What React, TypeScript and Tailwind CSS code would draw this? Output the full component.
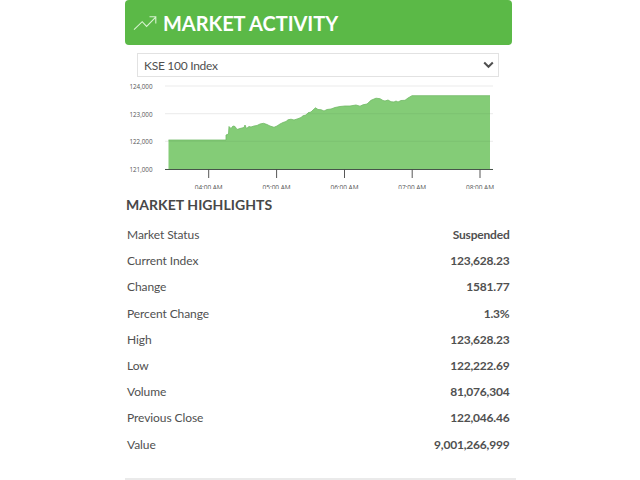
const rows: [string, string][] = [
  ["Market Status", "Suspended"],
  ["Current Index", "123,628.23"],
  ["Change", "1581.77"],
  ["Percent Change", "1.3%"],
  ["High", "123,628.23"],
  ["Low", "122,222.69"],
  ["Volume", "81,076,304"],
  ["Previous Close", "122,046.46"],
  ["Value", "9,001,266,999"],
];

const line =
  "168.5,140 226,140 226,135 228.5,134 229,126.5 231,128.5 233,126 235,126.5 237,129.5 240,128.5 244,127.5 245,125 246.5,128.5 249,126.5 251,127 254,126 257,125.5 260,124 263.5,123.3 267,124.5 270,126 274,127.3 277,126 280,124 283,122.5 286,121.5 288,119.8 291,119.2 294,120 298,118.7 301,117.5 303,115.8 306,115 308,112.8 311,112 313,110 315.5,107.8 318,109.5 321,109.7 324,111 327,109.5 331,109 335,107.5 340,106.5 345,106 350,106 356,105 360,106.2 363,104.8 367,104 371,100.3 376,98.2 380,98.7 383,100.5 385,101 388,100 391,101.7 394,102 396,101 398,102 401,100.5 405,100.3 408,98 412,95.7 490,95.7";

const gridLines = [
  { y: 86, label: "124,000" },
  { y: 113.7, label: "123,000" },
  { y: 141.3, label: "122,000" },
  { y: 169.3, label: "121,000" },
];

const ticks = [
  { x: 208.7, label: "04:00 AM" },
  { x: 276.6, label: "05:00 AM" },
  { x: 344.5, label: "06:00 AM" },
  { x: 412.2, label: "07:00 AM" },
  { x: 480, label: "08:00 AM" },
];

function Chart() {
  return (
    <svg className="block h-[111px] w-[391px] overflow-hidden font-['Open_Sans',sans-serif]" viewBox="125 78 391 111">
      {gridLines.map((g) => (
        <g key={g.label}>
          <path d={`M165 ${g.y}H493`} stroke="#ebebeb" strokeWidth="1" />
          <text x="152.5" y={g.y + 3} textAnchor="end" textLength="23" fontSize="6.3" fill="#555">
            {g.label}
          </text>
        </g>
      ))}
      <polygon points={`168.5,169.5 ${line} 490,169.5`} fill="#84cc77" />
      <polyline points={line} fill="none" stroke="#70b965" strokeWidth="0.8" />
      <path d="M168.5 113.7H490M168.5 141.3H490" stroke="#000" strokeOpacity="0.05" clipPath="url(#area)" />
      <clipPath id="area">
        <polygon points={`168.5,169.5 ${line} 490,169.5`} />
      </clipPath>
      <path d="M165 169.5H493" stroke="#47554a" strokeWidth="1" />
      {ticks.map((t) => (
        <g key={t.label}>
          <path d={`M${t.x} 169.5V178`} stroke="#444" strokeWidth="0.9" />
          <text x={t.x} y="190.3" textAnchor="middle" textLength="28" fontSize="6.5" fill="#555">
            {t.label}
          </text>
        </g>
      ))}
    </svg>
  );
}

export default function App() {
  return (
    <div className="h-[480px] w-[640px] overflow-hidden bg-white pl-[125px] font-[Lato,sans-serif] text-[#505050]">
      <div className="flex h-[478px] w-[391px] flex-col">
        <header className="flex h-[45px] w-[387px] shrink-0 items-center rounded-[4px] bg-[#5bb947] pl-2">
          <svg className="h-[18px] w-[25px] shrink-0" viewBox="0 0 25 18" fill="none" stroke="#d8f3d1" strokeWidth="1.1">
            <path d="M1 15.7L9.2 7.7L13.6 12.4L22.5 3.3M16.5 2.8H22.8V9.5" />
          </svg>
          <h1 className="ml-[5px] mt-px whitespace-nowrap text-[20px] font-bold leading-[45px] tracking-[-0.05px] text-white">
            MARKET ACTIVITY
          </h1>
        </header>
        <div className="ml-3 mt-2 flex h-[24px] w-[362px] shrink-0 items-center justify-between border border-[#e2e2e2] pl-[6px] pr-1">
          <span className="pt-px text-[12px] tracking-[-0.28px]">KSE 100 Index</span>
          <svg className="h-[8px] w-[11px]" viewBox="0 0 11 8" fill="none" stroke="#505050" strokeWidth="2">
            <path d="M1.2 1.5L5.5 5.8L9.8 1.5" />
          </svg>
        </div>
        <div className="mt-px shrink-0">
          <Chart />
        </div>
        <h2 className="ml-px mt-[6px] h-[20px] whitespace-nowrap text-[14px] font-bold leading-[20px] tracking-[0.05px] text-[#484848]">
          MARKET HIGHLIGHTS
        </h2>
        <dl className="mt-[7px] pl-[2px] pr-[6.5px] text-[12px]">
          {rows.map(([k, v]) => (
            <div key={k} className="flex h-[26.2px] items-center justify-between">
              <dt className="tracking-[-0.08px]">{k}</dt>
              <dd className="font-bold tracking-[-0.2px]">{v}</dd>
            </div>
          ))}
        </dl>
      </div>
      <div className="h-[2px] w-[391px] bg-[#eaeaea]" />
    </div>
  );
}
